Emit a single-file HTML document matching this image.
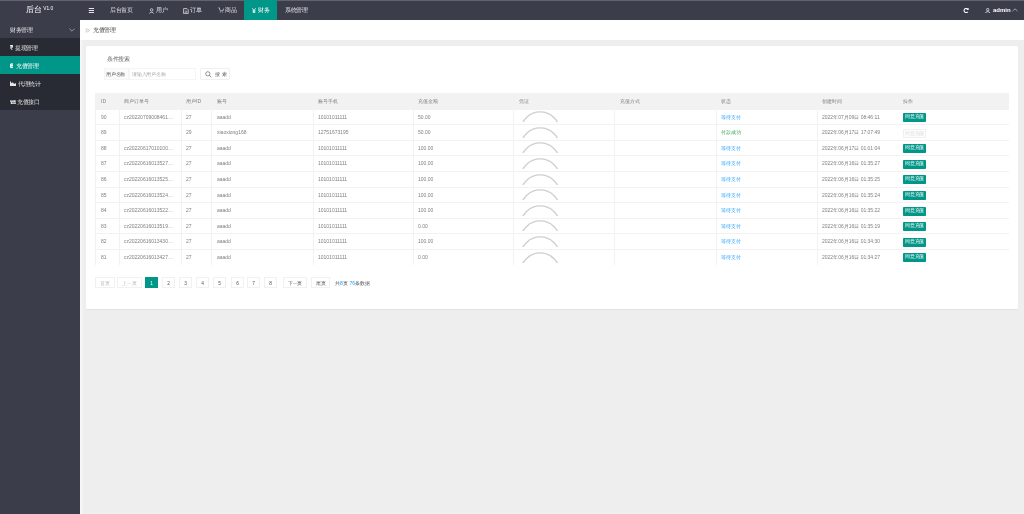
<!DOCTYPE html>
<html><head><meta charset="utf-8">
<style>
*{margin:0;padding:0;box-sizing:border-box}
html,body{width:1024px;height:514px;overflow:hidden}
body{background:#eeeeee;font-family:"Liberation Sans",sans-serif;color:#666;position:relative;font-size:5.6px}
.abs{position:absolute}
body>div.t,.c,.pg,.btn{will-change:transform}
#hdr{left:0;top:0;width:1024px;height:20px;background:#3b3d4a;border-top:1px solid #62646d}
#side{left:0;top:20px;width:80px;height:494px;background:#3b3d4a}
.t{position:absolute;white-space:nowrap;line-height:1}
.w7{color:rgba(255,255,255,.85)}
#crumb{left:80px;top:20px;width:944px;height:20px;background:#fff}
#card{left:86px;top:45.5px;width:932px;height:263px;background:#fff;border-radius:1px;box-shadow:0 0.5px 1px rgba(0,0,0,.06)}
.row{position:absolute;left:95.5px;width:913.5px;height:15.6px;border-bottom:0.6px solid #f0f0f0}
.c{position:absolute;top:0;height:15.6px;line-height:15.6px;white-space:nowrap;overflow:hidden;text-overflow:ellipsis;font-size:5px;color:#808080}
.vl{position:absolute;top:108.6px;height:156px;width:0.6px;background:#f2f2f2}
.pg{position:absolute;top:277.2px;height:11.2px;border:0.6px solid #f1f1f1;background:#fff;font-size:4.8px;line-height:12.4px;text-align:center;color:#555}
.btn{position:absolute;left:903px;width:23px;height:8.6px;background:#009688;color:#fff;font-size:4.6px;line-height:8.6px;text-align:center;border-radius:0.8px}
.btnd{background:#fdfdfd;color:#dcdcdc;border:0.6px solid #f0f0f0;line-height:7.6px}
.circ{position:absolute;width:40.5px;height:40.5px;border-radius:50%;border:1.8px solid #d6d6d6}
i{font-style:normal;display:inline-block;width:1em;text-align:center}
</style></head><body>

<div id="hdr" class="abs"></div>
<div class="t" style="left:26px;top:6px;font-size:8px;color:#fff"><i>后</i><i>台</i><span style="font-size:4.8px;position:relative;top:-2.2px;margin-left:1.2px">V1.0</span></div>
<svg class="abs" style="left:88px;top:7px" width="7" height="7" viewBox="0 0 7 7"><path d="M0.8 1.5h5.2M0.8 3.5h5.2M0.8 5.5h5.2" stroke="#e6e6ea" stroke-width="1"/></svg>
<div class="t w7" style="left:110px;top:8.1px"><i>后</i><i>台</i><i>首</i><i>页</i></div>
<svg class="abs" style="left:148.8px;top:7.6px" width="6" height="6" viewBox="0 0 6 6"><circle cx="2.6" cy="1.9" r="1.3" fill="none" stroke="#ccc" stroke-width="0.9"/><path d="M0.5 5.6C0.8 3.8 4.4 3.8 4.7 5.6" fill="none" stroke="#ccc" stroke-width="0.9"/></svg>
<div class="t w7" style="left:156px;top:8.1px"><i>用</i><i>户</i></div>
<svg class="abs" style="left:182.6px;top:7.8px" width="6" height="6" viewBox="0 0 6 6"><path d="M0.6 0.6h3.4l1.2 1.2v3.8h-4.6z" fill="none" stroke="#ccc" stroke-width="0.9"/><path d="M1.8 3.2h2.4M1.8 4.3h2.4" stroke="#ccc" stroke-width="0.7"/></svg>
<div class="t w7" style="left:189.5px;top:8.1px"><i>订</i><i>单</i></div>
<svg class="abs" style="left:217.5px;top:7.2px" width="6" height="6" viewBox="0 0 6 6"><path d="M0.3 0.8h1l0.9 3h2.8l0.6-2.2" fill="none" stroke="#ccc" stroke-width="0.8"/><circle cx="2.4" cy="5" r="0.5" fill="#ccc"/><circle cx="4.6" cy="5" r="0.5" fill="#ccc"/></svg>
<div class="t w7" style="left:224.5px;top:8.1px"><i>商</i><i>品</i></div>
<div class="abs" style="left:244px;top:0;width:33px;height:20px;background:#009688"></div>
<svg class="abs" style="left:251.9px;top:7.8px" width="4" height="5.5" viewBox="0 0 4 5.5"><path d="M0.4 0.3L2 2.7L3.6 0.3M2 2.7V5.3M0.6 2.9h2.8M0.6 4.1h2.8" fill="none" stroke="#fff" stroke-width="0.85"/></svg>
<div class="t" style="left:257px;top:8.1px;color:#fff;margin-left:0.5px"><i>财</i><i>务</i></div>
<div class="t w7" style="left:285px;top:8.1px"><i>系</i><i>统</i><i>管</i><i>理</i></div>
<svg class="abs" style="left:962.5px;top:7.8px" width="6" height="5" viewBox="0 0 6 5"><path d="M4.9 1.3A2.1 2.1 0 1 0 4.9 3.7" fill="none" stroke="#fff" stroke-width="1.1"/><path d="M3.4 1.9h2.2V-0.2z" fill="#fff"/></svg>
<svg class="abs" style="left:985px;top:7.8px" width="5.6" height="5.2" viewBox="0 0 5.6 5.2"><circle cx="2.7" cy="1.6" r="1.2" fill="none" stroke="#eee" stroke-width="0.8"/><path d="M0.5 5C0.6 3.2 4.8 3.2 4.9 5" fill="none" stroke="#eee" stroke-width="0.8"/></svg>
<div class="t" style="left:992.5px;top:7.2px;color:#fff;font-size:6px;font-weight:bold">admin</div>
<svg class="abs" style="left:1012.4px;top:8px" width="6" height="4" viewBox="0 0 6 4"><path d="M0.5 3.2L3 0.8L5.5 3.2" fill="none" stroke="#ccc" stroke-width="0.7"/></svg>

<div id="side" class="abs"></div>
<div class="t w7" style="left:9.7px;top:27.6px"><i>财</i><i>务</i><i>管</i><i>理</i></div>
<svg class="abs" style="left:68.5px;top:27.6px" width="6" height="4" viewBox="0 0 6 4"><path d="M0.4 0.6L3 3.2L5.6 0.6" fill="none" stroke="#bbb" stroke-width="0.7"/></svg>
<div class="abs" style="left:0;top:38px;width:80px;height:72px;background:#282b33"></div>
<div class="abs" style="left:0;top:56.2px;width:80px;height:18.1px;background:#009688"></div>
<svg class="abs" style="left:9.6px;top:45.1px" width="3.6" height="5.2" viewBox="0 0 3.6 5.2"><path d="M0.2 0.55h3.2M0.2 1.85h3.2" stroke="#fff" stroke-width="0.9"/><path d="M0.5 0.55c2.4 0 2.4 2.5 0 2.5L2.6 5.1" fill="none" stroke="#fff" stroke-width="0.95"/></svg>
<div class="t w7" style="left:14.6px;top:45.8px"><i>提</i><i>现</i><i>管</i><i>理</i></div>
<svg class="abs" style="left:9.6px;top:63.4px" width="3.6" height="5.4" viewBox="0 0 3.6 5.4"><path d="M0.6 1h1.5c1.3 0 1.3 1.7 0 1.7h-1.5zM0.6 2.7h1.7c1.4 0 1.4 1.8 0 1.8h-1.7z" fill="none" stroke="#fff" stroke-width="1"/><path d="M1.5 0.2v5M2.3 0.2v1M2.3 4.2v1" stroke="#fff" stroke-width="0.5"/></svg>
<div class="t" style="left:16.4px;top:63.8px;color:#fff"><i>充</i><i>值</i><i>管</i><i>理</i></div>
<svg class="abs" style="left:9.8px;top:81px" width="6.6" height="5.4" viewBox="0 0 6.6 5.4"><path d="M0 0.2v5.2h6.4v-2.2l-1-1.2-1.3 0.9-1.2-1.7-1.3 1-1.1-2z" fill="#e8e8e8"/></svg>
<div class="t w7" style="left:17.7px;top:81.8px"><i>代</i><i>理</i><i>统</i><i>计</i></div>
<svg class="abs" style="left:9.8px;top:99.6px" width="6.4" height="4.2" viewBox="0 0 6.4 4.2"><path d="M0 1.1h5.4M1 3.1h5.4" stroke="#f0f0f0" stroke-width="1.1"/><path d="M4.4 0l1.8 1.1L4.4 2.1zM2 2.1L0.2 3.1L2 4.2z" fill="#f0f0f0"/></svg>
<div class="t w7" style="left:17.2px;top:99.8px"><i>充</i><i>值</i><i>接</i><i>口</i></div>
<div class="abs" style="left:80px;top:40px;width:4px;height:474px;background:linear-gradient(90deg,#f8f8f9,#f2f1f3 60%,#eeeeee)"></div>

<div id="crumb" class="abs"></div>
<svg class="abs" style="left:85.4px;top:28.4px" width="5" height="5" viewBox="0 0 5 5"><path d="M0.5 0.6L2.2 2.5L0.5 4.4M2.4 0.6L4.1 2.5L2.4 4.4" fill="none" stroke="#aaa" stroke-width="0.7"/></svg>
<div class="t" style="left:93px;top:27.8px;color:#444"><i>充</i><i>值</i><i>管</i><i>理</i></div>

<div id="card" class="abs"></div>
<div class="t" style="left:106.5px;top:56.6px;color:#666"><i>条</i><i>件</i><i>搜</i><i>索</i></div>
<div class="abs" style="left:104px;top:68.4px;width:25.4px;height:12px;background:#fbfbfb;border:0.6px solid #f5f5f5"></div>
<div class="t" style="left:105.8px;top:72.6px;font-size:4.8px;color:#555"><i>用</i><i>户</i><i>名</i><i>称</i></div>
<div class="abs" style="left:129px;top:68.4px;width:67px;height:12px;background:#fff;border:0.6px solid #f5f5f5"></div>
<div class="t" style="left:132px;top:72.5px;font-size:4.8px;color:#aaa"><i>请</i><i>输</i><i>入</i><i>用</i><i>户</i><i>名</i><i>称</i></div>
<div class="abs" style="left:199.8px;top:67.9px;width:30.2px;height:12.6px;background:#fff;border:0.6px solid #f0f0f0;border-radius:1px"></div>
<svg class="abs" style="left:204.8px;top:71.2px" width="7" height="7" viewBox="0 0 7 7"><circle cx="2.8" cy="2.8" r="2.1" fill="none" stroke="#666" stroke-width="0.7"/><path d="M4.4 4.4L6.2 6.2" stroke="#666" stroke-width="0.8"/></svg>
<div class="t" style="left:214.8px;top:71.8px;font-size:5.2px;color:#666"><i>搜</i> <i>索</i></div>

<!--TABLE-->
<div class="abs" style="left:95.5px;top:93px;width:913.5px;height:15.6px;background:#f2f2f2"></div>
<div class="abs" style="left:95px;top:93px;width:0.6px;height:171.6px;background:#f2f2f2"></div>
<div class="c" style="left:101.1px;top:93.9px;width:11.5px">ID</div>
<div class="c" style="left:124.2px;top:93.9px;width:50.4px"><i>商</i><i>户</i><i>订</i><i>单</i><i>号</i></div>
<div class="c" style="left:186.2px;top:93.9px;width:19.0px"><i>用</i><i>户</i>ID</div>
<div class="c" style="left:216.8px;top:93.9px;width:89.7px"><i>账</i><i>号</i></div>
<div class="c" style="left:318.1px;top:93.9px;width:88.6px"><i>账</i><i>号</i><i>手</i><i>机</i></div>
<div class="c" style="left:418.3px;top:93.9px;width:88.9px"><i>充</i><i>值</i><i>金</i><i>额</i></div>
<div class="c" style="left:518.8px;top:93.9px;width:89.6px"><i>凭</i><i>证</i></div>
<div class="c" style="left:620.0px;top:93.9px;width:89.5px"><i>充</i><i>值</i><i>方</i><i>式</i></div>
<div class="c" style="left:721.1px;top:93.9px;width:89.5px"><i>状</i><i>态</i></div>
<div class="c" style="left:822.2px;top:93.9px;width:69.2px"><i>创</i><i>建</i><i>时</i><i>间</i></div>
<div class="c" style="left:903.0px;top:93.9px;width:100.0px"><i>操</i><i>作</i></div>
<div class="abs" style="left:95.5px;top:108.6px;width:913.5px;height:0.6px;background:#f2f2f2"></div>
<div class="c" style="left:101.1px;top:109.5px;width:11.5px">90</div>
<div class="c" style="left:124.2px;top:109.5px;width:50.4px">cz20220709008461234</div>
<div class="c" style="left:186.2px;top:109.5px;width:19.0px">27</div>
<div class="c" style="left:216.8px;top:109.5px;width:89.7px">aaadd</div>
<div class="c" style="left:318.1px;top:109.5px;width:88.6px">10101011111</div>
<div class="c" style="left:418.3px;top:109.5px;width:88.9px">50.00</div>
<svg class="abs" style="left:514px;top:111.2px" width="60" height="11"><circle cx="26.2" cy="20.5" r="19.6" fill="none" stroke="#cfcfcf" stroke-width="1.4"/></svg>
<div class="c" style="left:721.1px;top:109.5px;width:89.5px;color:#1E9FFF"><i>等</i><i>待</i><i>支</i><i>付</i></div>
<div class="c" style="left:822.2px;top:109.5px;width:69.2px">2022<i>年</i>07<i>月</i>09<i>日</i> 08:46:11</div>
<div class="btn" style="top:112.9px"><i>同</i><i>意</i><i>充</i><i>值</i></div>
<div class="abs" style="left:95.5px;top:124.2px;width:913.5px;height:0.6px;background:#f2f2f2"></div>
<div class="c" style="left:101.1px;top:125.1px;width:11.5px">89</div>
<div class="c" style="left:124.2px;top:125.1px;width:50.4px"></div>
<div class="c" style="left:186.2px;top:125.1px;width:19.0px">29</div>
<div class="c" style="left:216.8px;top:125.1px;width:89.7px">xiaoxiong168</div>
<div class="c" style="left:318.1px;top:125.1px;width:88.6px">12751673195</div>
<div class="c" style="left:418.3px;top:125.1px;width:88.9px">50.00</div>
<svg class="abs" style="left:514px;top:126.8px" width="60" height="11"><circle cx="26.2" cy="20.5" r="19.6" fill="none" stroke="#cfcfcf" stroke-width="1.4"/></svg>
<div class="c" style="left:721.1px;top:125.1px;width:89.5px;color:#34a050"><i>付</i><i>款</i><i>成</i><i>功</i></div>
<div class="c" style="left:822.2px;top:125.1px;width:69.2px">2022<i>年</i>06<i>月</i>17<i>日</i> 17:07:49</div>
<div class="btn btnd" style="top:128.5px"><i>同</i><i>意</i><i>充</i><i>值</i></div>
<div class="abs" style="left:95.5px;top:139.8px;width:913.5px;height:0.6px;background:#f2f2f2"></div>
<div class="c" style="left:101.1px;top:140.7px;width:11.5px">88</div>
<div class="c" style="left:124.2px;top:140.7px;width:50.4px">cz20220617010100123</div>
<div class="c" style="left:186.2px;top:140.7px;width:19.0px">27</div>
<div class="c" style="left:216.8px;top:140.7px;width:89.7px">aaadd</div>
<div class="c" style="left:318.1px;top:140.7px;width:88.6px">10101011111</div>
<div class="c" style="left:418.3px;top:140.7px;width:88.9px">100.00</div>
<svg class="abs" style="left:514px;top:142.4px" width="60" height="11"><circle cx="26.2" cy="20.5" r="19.6" fill="none" stroke="#cfcfcf" stroke-width="1.4"/></svg>
<div class="c" style="left:721.1px;top:140.7px;width:89.5px;color:#1E9FFF"><i>等</i><i>待</i><i>支</i><i>付</i></div>
<div class="c" style="left:822.2px;top:140.7px;width:69.2px">2022<i>年</i>06<i>月</i>17<i>日</i> 01:01:04</div>
<div class="btn" style="top:144.1px"><i>同</i><i>意</i><i>充</i><i>值</i></div>
<div class="abs" style="left:95.5px;top:155.4px;width:913.5px;height:0.6px;background:#f2f2f2"></div>
<div class="c" style="left:101.1px;top:156.3px;width:11.5px">87</div>
<div class="c" style="left:124.2px;top:156.3px;width:50.4px">cz20220616013527123</div>
<div class="c" style="left:186.2px;top:156.3px;width:19.0px">27</div>
<div class="c" style="left:216.8px;top:156.3px;width:89.7px">aaadd</div>
<div class="c" style="left:318.1px;top:156.3px;width:88.6px">10101011111</div>
<div class="c" style="left:418.3px;top:156.3px;width:88.9px">100.00</div>
<svg class="abs" style="left:514px;top:158.0px" width="60" height="11"><circle cx="26.2" cy="20.5" r="19.6" fill="none" stroke="#cfcfcf" stroke-width="1.4"/></svg>
<div class="c" style="left:721.1px;top:156.3px;width:89.5px;color:#1E9FFF"><i>等</i><i>待</i><i>支</i><i>付</i></div>
<div class="c" style="left:822.2px;top:156.3px;width:69.2px">2022<i>年</i>06<i>月</i>16<i>日</i> 01:35:27</div>
<div class="btn" style="top:159.7px"><i>同</i><i>意</i><i>充</i><i>值</i></div>
<div class="abs" style="left:95.5px;top:171.0px;width:913.5px;height:0.6px;background:#f2f2f2"></div>
<div class="c" style="left:101.1px;top:171.9px;width:11.5px">86</div>
<div class="c" style="left:124.2px;top:171.9px;width:50.4px">cz20220616013525123</div>
<div class="c" style="left:186.2px;top:171.9px;width:19.0px">27</div>
<div class="c" style="left:216.8px;top:171.9px;width:89.7px">aaadd</div>
<div class="c" style="left:318.1px;top:171.9px;width:88.6px">10101011111</div>
<div class="c" style="left:418.3px;top:171.9px;width:88.9px">100.00</div>
<svg class="abs" style="left:514px;top:173.6px" width="60" height="11"><circle cx="26.2" cy="20.5" r="19.6" fill="none" stroke="#cfcfcf" stroke-width="1.4"/></svg>
<div class="c" style="left:721.1px;top:171.9px;width:89.5px;color:#1E9FFF"><i>等</i><i>待</i><i>支</i><i>付</i></div>
<div class="c" style="left:822.2px;top:171.9px;width:69.2px">2022<i>年</i>06<i>月</i>16<i>日</i> 01:35:25</div>
<div class="btn" style="top:175.3px"><i>同</i><i>意</i><i>充</i><i>值</i></div>
<div class="abs" style="left:95.5px;top:186.6px;width:913.5px;height:0.6px;background:#f2f2f2"></div>
<div class="c" style="left:101.1px;top:187.5px;width:11.5px">85</div>
<div class="c" style="left:124.2px;top:187.5px;width:50.4px">cz20220616013524123</div>
<div class="c" style="left:186.2px;top:187.5px;width:19.0px">27</div>
<div class="c" style="left:216.8px;top:187.5px;width:89.7px">aaadd</div>
<div class="c" style="left:318.1px;top:187.5px;width:88.6px">10101011111</div>
<div class="c" style="left:418.3px;top:187.5px;width:88.9px">100.00</div>
<svg class="abs" style="left:514px;top:189.2px" width="60" height="11"><circle cx="26.2" cy="20.5" r="19.6" fill="none" stroke="#cfcfcf" stroke-width="1.4"/></svg>
<div class="c" style="left:721.1px;top:187.5px;width:89.5px;color:#1E9FFF"><i>等</i><i>待</i><i>支</i><i>付</i></div>
<div class="c" style="left:822.2px;top:187.5px;width:69.2px">2022<i>年</i>06<i>月</i>16<i>日</i> 01:35:24</div>
<div class="btn" style="top:190.9px"><i>同</i><i>意</i><i>充</i><i>值</i></div>
<div class="abs" style="left:95.5px;top:202.2px;width:913.5px;height:0.6px;background:#f2f2f2"></div>
<div class="c" style="left:101.1px;top:203.1px;width:11.5px">84</div>
<div class="c" style="left:124.2px;top:203.1px;width:50.4px">cz20220616013522123</div>
<div class="c" style="left:186.2px;top:203.1px;width:19.0px">27</div>
<div class="c" style="left:216.8px;top:203.1px;width:89.7px">aaadd</div>
<div class="c" style="left:318.1px;top:203.1px;width:88.6px">10101011111</div>
<div class="c" style="left:418.3px;top:203.1px;width:88.9px">100.00</div>
<svg class="abs" style="left:514px;top:204.8px" width="60" height="11"><circle cx="26.2" cy="20.5" r="19.6" fill="none" stroke="#cfcfcf" stroke-width="1.4"/></svg>
<div class="c" style="left:721.1px;top:203.1px;width:89.5px;color:#1E9FFF"><i>等</i><i>待</i><i>支</i><i>付</i></div>
<div class="c" style="left:822.2px;top:203.1px;width:69.2px">2022<i>年</i>06<i>月</i>16<i>日</i> 01:35:22</div>
<div class="btn" style="top:206.5px"><i>同</i><i>意</i><i>充</i><i>值</i></div>
<div class="abs" style="left:95.5px;top:217.8px;width:913.5px;height:0.6px;background:#f2f2f2"></div>
<div class="c" style="left:101.1px;top:218.7px;width:11.5px">83</div>
<div class="c" style="left:124.2px;top:218.7px;width:50.4px">cz20220616013519123</div>
<div class="c" style="left:186.2px;top:218.7px;width:19.0px">27</div>
<div class="c" style="left:216.8px;top:218.7px;width:89.7px">aaadd</div>
<div class="c" style="left:318.1px;top:218.7px;width:88.6px">10101011111</div>
<div class="c" style="left:418.3px;top:218.7px;width:88.9px">0.00</div>
<svg class="abs" style="left:514px;top:220.4px" width="60" height="11"><circle cx="26.2" cy="20.5" r="19.6" fill="none" stroke="#cfcfcf" stroke-width="1.4"/></svg>
<div class="c" style="left:721.1px;top:218.7px;width:89.5px;color:#1E9FFF"><i>等</i><i>待</i><i>支</i><i>付</i></div>
<div class="c" style="left:822.2px;top:218.7px;width:69.2px">2022<i>年</i>06<i>月</i>16<i>日</i> 01:35:19</div>
<div class="btn" style="top:222.1px"><i>同</i><i>意</i><i>充</i><i>值</i></div>
<div class="abs" style="left:95.5px;top:233.4px;width:913.5px;height:0.6px;background:#f2f2f2"></div>
<div class="c" style="left:101.1px;top:234.3px;width:11.5px">82</div>
<div class="c" style="left:124.2px;top:234.3px;width:50.4px">cz20220616013430123</div>
<div class="c" style="left:186.2px;top:234.3px;width:19.0px">27</div>
<div class="c" style="left:216.8px;top:234.3px;width:89.7px">aaadd</div>
<div class="c" style="left:318.1px;top:234.3px;width:88.6px">10101011111</div>
<div class="c" style="left:418.3px;top:234.3px;width:88.9px">100.00</div>
<svg class="abs" style="left:514px;top:236.0px" width="60" height="11"><circle cx="26.2" cy="20.5" r="19.6" fill="none" stroke="#cfcfcf" stroke-width="1.4"/></svg>
<div class="c" style="left:721.1px;top:234.3px;width:89.5px;color:#1E9FFF"><i>等</i><i>待</i><i>支</i><i>付</i></div>
<div class="c" style="left:822.2px;top:234.3px;width:69.2px">2022<i>年</i>06<i>月</i>16<i>日</i> 01:34:30</div>
<div class="btn" style="top:237.7px"><i>同</i><i>意</i><i>充</i><i>值</i></div>
<div class="abs" style="left:95.5px;top:249.0px;width:913.5px;height:0.6px;background:#f2f2f2"></div>
<div class="c" style="left:101.1px;top:249.9px;width:11.5px">81</div>
<div class="c" style="left:124.2px;top:249.9px;width:50.4px">cz20220616013427123</div>
<div class="c" style="left:186.2px;top:249.9px;width:19.0px">27</div>
<div class="c" style="left:216.8px;top:249.9px;width:89.7px">aaadd</div>
<div class="c" style="left:318.1px;top:249.9px;width:88.6px">10101011111</div>
<div class="c" style="left:418.3px;top:249.9px;width:88.9px">0.00</div>
<svg class="abs" style="left:514px;top:251.6px" width="60" height="11"><circle cx="26.2" cy="20.5" r="19.6" fill="none" stroke="#cfcfcf" stroke-width="1.4"/></svg>
<div class="c" style="left:721.1px;top:249.9px;width:89.5px;color:#1E9FFF"><i>等</i><i>待</i><i>支</i><i>付</i></div>
<div class="c" style="left:822.2px;top:249.9px;width:69.2px">2022<i>年</i>06<i>月</i>16<i>日</i> 01:34:27</div>
<div class="btn" style="top:253.3px"><i>同</i><i>意</i><i>充</i><i>值</i></div>
<div class="vl" style="left:118.6px"></div>
<div class="vl" style="left:180.6px"></div>
<div class="vl" style="left:211.2px"></div>
<div class="vl" style="left:312.5px"></div>
<div class="vl" style="left:412.7px"></div>
<div class="vl" style="left:513.2px"></div>
<div class="vl" style="left:614.4px"></div>
<div class="vl" style="left:715.5px"></div>
<div class="vl" style="left:816.6px"></div>
<div class="pg" style="left:94.8px;width:19.5px;color:#bbb"><i>首</i><i>页</i></div>
<div class="pg" style="left:117.3px;width:24.7px;color:#bbb"><i>上</i><i>一</i><i>页</i></div>
<div class="pg" style="left:145.1px;width:13.0px;background:#009688;border-color:#009688;color:#fff">1</div>
<div class="pg" style="left:161.8px;width:13.0px;color:#555">2</div>
<div class="pg" style="left:178.9px;width:13.0px;color:#555">3</div>
<div class="pg" style="left:196.2px;width:13.0px;color:#555">4</div>
<div class="pg" style="left:213.4px;width:13.0px;color:#555">5</div>
<div class="pg" style="left:230.7px;width:13.0px;color:#555">6</div>
<div class="pg" style="left:247.3px;width:13.0px;color:#555">7</div>
<div class="pg" style="left:264.4px;width:13.0px;color:#555">8</div>
<div class="pg" style="left:282.6px;width:23.8px;color:#555"><i>下</i><i>一</i><i>页</i></div>
<div class="pg" style="left:311.3px;width:19.2px;color:#555"><i>尾</i><i>页</i></div>
<div class="t" style="left:335.2px;top:281.2px;font-size:5.1px;color:#555"><i>共</i><span style="color:#1E9FFF">8</span><i>页</i> <span style="color:#1E9FFF">76</span><i>条</i><i>数</i><i>据</i></div>
<!--/TABLE-->
</body></html>
